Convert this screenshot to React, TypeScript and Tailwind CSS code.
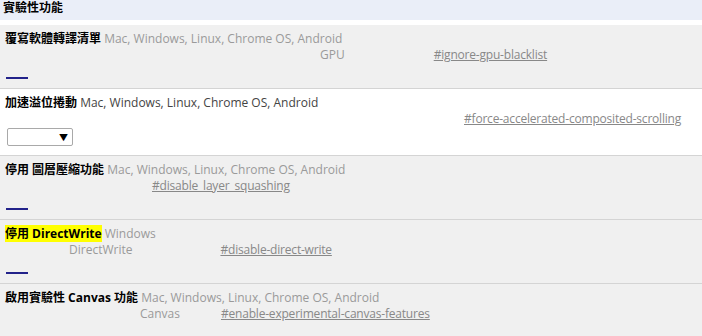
import React from 'react';

interface Flag {
  title: React.ReactNode;
  platforms: string;
  dark?: boolean;
  desc?: string;
  descPad?: number;
  linkPad: number;
  link: string;
  select?: boolean;
}

const FLAGS: Flag[] = [
  {
    title: '覆寫軟體轉譯清單',
    platforms: 'Mac, Windows, Linux, Chrome OS, Android',
    desc: 'GPU',
    descPad: 315,
    linkPad: 89,
    link: '#ignore-gpu-blacklist',
  },
  {
    title: '加速溢位捲動',
    platforms: 'Mac, Windows, Linux, Chrome OS, Android',
    dark: true,
    linkPad: 459,
    link: '#force-accelerated-composited-scrolling',
    select: true,
  },
  {
    title: '停用 圖層壓縮功能',
    platforms: 'Mac, Windows, Linux, Chrome OS, Android',
    linkPad: 147,
    link: '#disable_layer_squashing',
  },
  {
    title: <span className="bg-[#ffff00]">停用 DirectWrite</span>,
    platforms: 'Windows',
    desc: 'DirectWrite',
    descPad: 64,
    linkPad: 88,
    link: '#disable-direct-write',
  },
  {
    title: '啟用實驗性 Canvas 功能',
    platforms: 'Mac, Windows, Linux, Chrome OS, Android',
    desc: 'Canvas',
    descPad: 135,
    linkPad: 41,
    link: '#enable-experimental-canvas-features',
  },
];

const FlagRow: React.FC<{ flag: Flag }> = ({ flag }) => (
  <div
    className={`px-[5px] pt-[6px] pb-[9px] border-b border-[#d4d4d4] ${
      flag.select ? 'bg-white' : 'bg-[#f0f0f0]'
    }`}
  >
    <div className="leading-4 whitespace-nowrap">
      <span className="font-bold text-black">{flag.title}</span>{' '}
      <span className={flag.dark ? 'text-[#444]' : 'text-[#9a9a9a]'}>{flag.platforms}</span>
    </div>
    <div className="leading-4 whitespace-nowrap flex">
      {flag.desc && (
        <span className="text-[#9a9a9a]" style={{ paddingLeft: flag.descPad }}>
          {flag.desc}
        </span>
      )}
      <span className="text-[#888] underline tracking-[-0.2px]" style={{ paddingLeft: flag.linkPad }}>
        {flag.link}
      </span>
    </div>
    {flag.select ? (
      <div className="mt-[1px] ml-[2px] w-[66px] h-[18px] border border-[#a9a9a9] rounded-[2px] bg-white flex items-center justify-end pr-[4px]">
        <span className="text-[9px] text-black leading-none">▼</span>
      </div>
    ) : (
      <div className="mt-[14px] ml-[1px] w-[22px] h-[2px] bg-[#22228a]" />
    )}
  </div>
);

export default function App() {
  return (
    <div
      className="w-[702px] h-[336px] overflow-hidden bg-white text-[12px]"
      style={{ fontFamily: '"Open Sans", "Noto Sans CJK TC", sans-serif' }}
    >
      <div className="h-[20px] bg-[#eaeef8] pl-[3px] pt-[1px] leading-[13px] font-bold text-black">實驗性功能</div>
      <div className="h-[5px]" />
      {FLAGS.map((f, i) => (
        <FlagRow key={i} flag={f} />
      ))}
    </div>
  );
}
